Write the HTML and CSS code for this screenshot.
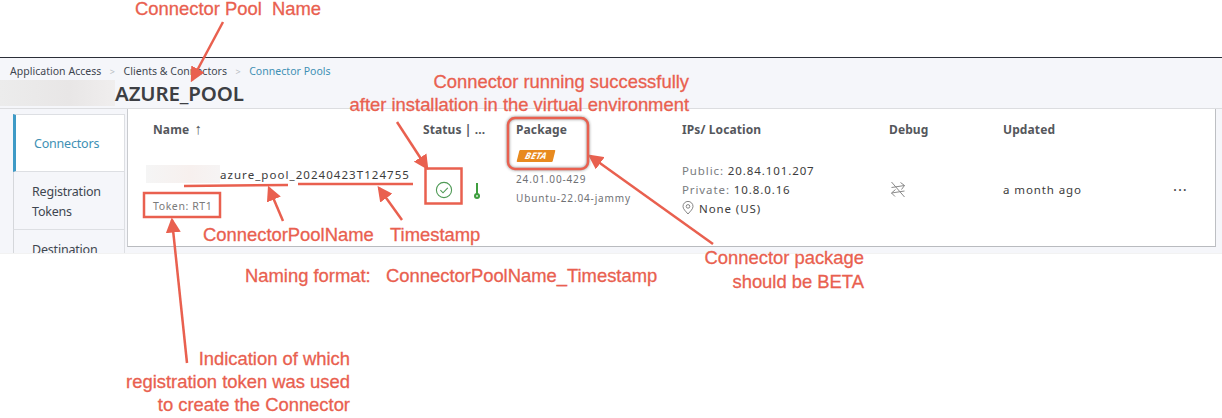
FILE: index.html
```html
<!DOCTYPE html>
<html lang="en">
<head>
<meta charset="utf-8">
<title>Connector Pool</title>
<link rel="stylesheet" href="styles.css">
</head>
<body>
<div class="stage">
  <div class="app">
    <nav class="crumbs">
      <span>Application Access</span><span class="sep">&gt;</span>
      <span>Clients &amp; Connectors</span><span class="sep">&gt;</span>
      <span class="current">Connector Pools</span>
    </nav>
    <div class="title-row">
      <div class="blur title-blur"></div>
      <h1>AZURE_POOL</h1>
    </div>
    <div class="main">
      <aside class="tabs">
        <div class="tab active">Connectors</div>
        <div class="tab">Registration Tokens</div>
        <div class="tab">Destination</div>
      </aside>
      <section class="card">
        <div class="grid head">
          <div>Name <span class="sort">↑</span></div>
          <div>Status | ...</div>
          <div>Package</div>
          <div>IPs/ Location</div>
          <div>Debug</div>
          <div>Updated</div>
          <div></div>
        </div>
        <div class="grid row">
          <div class="name-cell">
            <div class="name-line"><div class="blur name-blur"></div><span>azure_pool_20240423T124755</span></div>
            <div class="token">Token: RT1</div>
          </div>
          <div class="status-cell">
            <svg width="18" height="18" viewBox="0 0 18 18" fill="none" stroke="#4f9a56" stroke-width="1.1"><circle cx="9" cy="9" r="7.6"/><path d="M5.4 9.2l2.6 2.6 4.8-5"/></svg>
            <svg class="thermo" width="8" height="18" viewBox="0 0 8 18"><rect x="3" y="1" width="2" height="12" fill="#3f9e3f"/><circle cx="4" cy="14" r="3" fill="#3f9e3f"/><circle cx="4" cy="14" r="1" fill="#d5ecd5"/></svg>
          </div>
          <div class="pkg-cell">
            <div class="beta"><span>BETA</span></div>
            <div class="pkg-text">24.01.00-429</div>
            <div class="pkg-text">Ubuntu-22.04-jammy</div>
          </div>
          <div class="ip-cell">
            <div><span class="muted">Public:</span> 20.84.101.207</div>
            <div><span class="muted">Private:</span> 10.8.0.16</div>
            <div class="loc"><svg width="12" height="14" viewBox="0 0 12 14" fill="none" stroke="#777" stroke-width=".9"><path d="M6 13C3.5 10 1 8 1 5.4a5 5 0 0 1 10 0C11 8 8.500 10 6 13z"/><circle cx="6" cy="5.400" r="1.800"/></svg><span>None (US)</span></div>
          </div>
          <div class="debug-cell">
            <svg width="18" height="17" viewBox="0 0 18 17" fill="none" stroke="#8a8a8a" stroke-width="1"><path d="M2.500 6.500L15.500 4.500M11.500 1.500l4 3-3 4M15.500 10L2.500 12M6.500 8.500l-4 3.500 3.500 3.500M2.500 1l13 15"/></svg>
          </div>
          <div class="updated">a month ago</div>
          <div class="dots">···</div>
        </div>
      </section>
    </div>
  </div>

  <svg class="marks" width="1222" height="418" viewBox="0 0 1222 418" fill="none" stroke="#e9604f" stroke-width="2.500">
    <defs>
      <marker id="head" markerWidth="6" markerHeight="6" refX="5" refY="3" orient="auto" markerUnits="strokeWidth"><path d="M0 0L6 3L0 6z" fill="#e9604f" stroke="none"/></marker>
    </defs>
    <path d="M223 22L192 80" marker-end="url(#head)"/>
    <path d="M397 122L427 168" marker-end="url(#head)"/>
    <path d="M184 186L288 185"/>
    <path d="M298 184L413 184"/>
    <path d="M283 221L269 188" marker-end="url(#head)"/>
    <path d="M402 220L379 188" marker-end="url(#head)"/>
    <path d="M187 363L172 220" marker-end="url(#head)"/>
    <path d="M713 244L590 156" marker-end="url(#head)"/>
    <rect x="144" y="193" width="76" height="24"/>
    <rect x="425.500" y="168.500" width="36" height="35"/>
    <rect class="pkg-box" x="508" y="118" width="80" height="51" rx="7"/>
  </svg>

  <div class="note n1">Connector Pool&nbsp; Name</div>
  <div class="note right n2">Connector running successfully<br>after installation in the virtual environment</div>
  <div class="note n3">ConnectorPoolName</div>
  <div class="note n4">Timestamp</div>
  <div class="note n5">Naming format:&nbsp;&nbsp; ConnectorPoolName_Timestamp</div>
  <div class="note right n6">Connector package<br>should be BETA</div>
  <div class="note right n7">Indication of which<br>registration token was used<br>to create the Connector</div>
</div>
</body>
</html>
```
FILE: styles.css
```css
* { box-sizing: border-box; }
html, body { margin: 0; background: #fff; }
body { font-family: "Noto Sans", "Liberation Sans", sans-serif; color: #3c3c3c; }
.stage { position: relative; width: 1222px; height: 418px; overflow: hidden; padding-top: 57px; }
.app { height: 196px; background: #f5f6fa; border-top: 1px solid #2b2f38; overflow: hidden; box-shadow: 0 1px 0 #f2f2f2; }

.crumbs { display: flex; gap: 7px; align-items: center; height: 26px; padding-left: 10px; font-size: 10.5px; letter-spacing: .03px; color: #3f4650; }
.crumbs .sep { color: #b8bcc2; font-size: 9px; margin: 0 1.500px; }
.crumbs .current { color: #3e90b4; }

.title-row { display: flex; height: 24px; align-items: center; margin-top: -3px; }
.blur { background: linear-gradient(90deg, #ececec, #e8e6e6 60%, #f0eeee); flex: none; }
.title-blur { width: 115px; height: 26px; }
h1 { margin: 0; font-size: 20.500px; font-weight: 600; color: #3d3f44; line-height: 24px; letter-spacing: -.15px; }

.main { display: flex; margin-top: 3px; height: 150px; border-top: 1px solid #dcdde0; padding-left: 13px; }
.tabs { width: 112px; margin-top: 5px; font-size: 12.5px; flex: none; }
.tab { height: 58px; display: flex; padding: 10px 18px 0; border: 1px solid #dddfe3; border-top: 0; border-left: 1px solid #d5d7db; line-height: 20px; color: #3f4650; letter-spacing: -.2px; background: #f5f6fa; }
.tab.active { align-items: center; background: #fff; color: #3e90b4; border-left: 3px solid #3e9ac6; border-top: 1px solid #dddfe3; padding: 2px 0 0 18px; }

.card { width: 1089px; height: 138px; margin-left: 2px; background: #fff; border-left: 1px solid #c9cbcf; border-right: 1px solid #bdbfc3; border-bottom: 1px solid #b9bbbf; padding-left: 25px; }
.grid { display: grid; grid-template-columns: 270px 93px 166px 207px 114px 170px 40px; }
.head { height: 40px; align-items: center; font-size: 12px; font-weight: 700; color: #55575c; letter-spacing: .1px; }
.sort { font-weight: 400; font-size: 15px; line-height: 12px; margin-left: 2px; }
.row { height: 80px; align-items: center; font-size: 11.500px; letter-spacing: .9px; color: #3c3c3c; }

.name-cell { margin-left: -7px; }
.name-line { display: flex; height: 18px; align-items: center; letter-spacing: 1.050px; }
.name-blur { width: 74px; height: 18px; background: linear-gradient(90deg, #f5f5f5, #f7f0ee 60%, #f6f4f4); }
.token { margin: 16px 0 0 7px; font-size: 10.500px; color: #7a7a7a; line-height: 14px; letter-spacing: .6px; }

.status-cell { display: flex; align-items: center; gap: 20px; padding-left: 12px; padding-top: 2px; }
.thermo { margin-top: 1px; }

.pkg-cell { padding-bottom: 20px; }
.beta { width: 36px; height: 12px; background: #e88a1e; transform: skewX(-14deg); margin: 0 0 8px 2px; border-radius: 1px; display: flex; align-items: center; justify-content: center; color: #fff; font-size: 9px; font-weight: 700; font-style: italic; letter-spacing: .2px; line-height: 12px; }
.pkg-text { font-size: 10px; line-height: 19px; color: #6f7175; letter-spacing: .85px; }

.ip-cell { line-height: 19px; }
.muted { color: #7a7c80; }
.loc { display: flex; align-items: center; gap: 5px; }

.debug-cell { display: flex; align-items: center; }
.dots { font-size: 15px; color: #444; }

.marks { position: absolute; left: 0; top: 0; pointer-events: none; }
.pkg-box { filter: drop-shadow(0 0 1.500px #8a8a8a); }

.note { position: absolute; font-family: "Liberation Sans", Arial, sans-serif; font-size: 18.400px; line-height: 23px; color: #e9604f; white-space: nowrap; -webkit-text-stroke: .3px #e9604f; }
.right { text-align: right; }
.n1 { left: 135px; top: 0; line-height: 18px; }
.n2 { right: 533px; top: 70px; }
.n3 { left: 203px; top: 223px; }
.n4 { left: 390px; top: 223px; }
.n5 { left: 245px; top: 264px; }
.n6 { right: 358px; top: 246px; line-height: 24px; }
.n7 { right: 872px; top: 347px; }
```
